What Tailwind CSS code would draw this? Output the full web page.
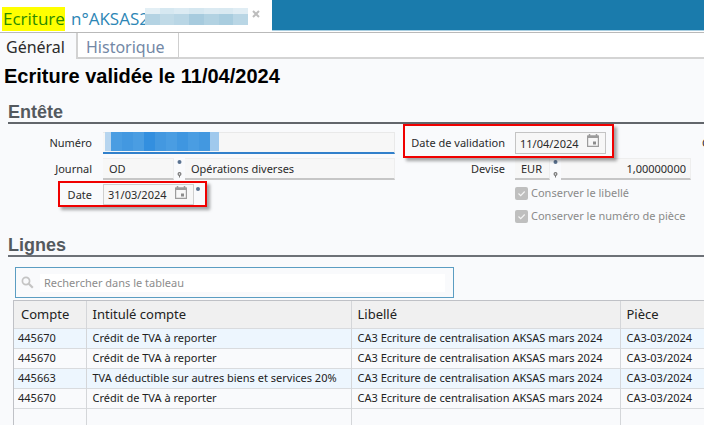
<!DOCTYPE html>
<html lang="fr">
<head>
<meta charset="utf-8">
<meta name="viewport" content="width=device-width, initial-scale=1">
<title>Ecriture</title>
<script src="https://cdn.jsdelivr.net/npm/@tailwindcss/browser@4"></script>
</head>
<body class="flex min-h-screen flex-col overflow-hidden bg-[#f9fafc] font-['Noto_Sans','Open_Sans',sans-serif] text-[11px] text-[#2b2b2b]">

<svg class="hidden" aria-hidden="true">
  <symbol id="calendar" viewBox="0 0 12 14">
    <path d="M2.500 0v3M9.500 0v3" stroke="#9c9c9c" stroke-width="1.500"/>
    <path d="M.6 2h10.800v10.400H.6z" fill="#f7f7f7" stroke="#9c9c9c" stroke-width="1.200"/>
    <path d="M.5 1.500h11v2.500H.5z" fill="#9c9c9c"/>
    <path d="M6 7.500h3v3H6z" fill="#8c8c8c"/>
  </symbol>
  <symbol id="marks" viewBox="0 0 5 20">
    <circle cx="2.500" cy="3" r="2" fill="#5a7291"/>
    <circle cx="2.500" cy="15" r="1.400" fill="none" stroke="#777" stroke-width="1.200"/>
    <path d="M2.500 16.500v2" stroke="#777"/>
  </symbol>
</svg>

<header class="flex h-[33px] border-b border-[#b9b9b9] bg-white">
  <div class="flex w-[272px] shrink-0 items-start pl-0.5">
    <h2 class="mt-[7px] flex font-['Open_Sans','Noto_Sans',sans-serif] text-[17px] leading-6 whitespace-nowrap text-[#2d86b5]">
      <span class="w-[63px] bg-[#ffff00] pl-px text-[#2c8a00]">Ecriture</span><span class="w-20 pl-1.5">n°AKSAS2</span>
    </h2>
    <div class="relative mt-2 grid w-[103px] grid-cols-7 grid-rows-[6px_11px]" aria-hidden="true">
      <i class="bg-[#e3eff5]"></i><i class="bg-[#d6e8f1]"></i><i class="bg-[#dcebf3]"></i><i class="bg-[#d5e7f0]"></i><i class="bg-[#dbeaf2]"></i><i class="bg-[#d9e9f1]"></i><i class="bg-[#e0edf4]"></i>
      <i class="bg-[#b4d3e3]"></i><i class="bg-[#c0dae7]"></i><i class="bg-[#b9d6e5]"></i><i class="bg-[#a7cbde]"></i><i class="bg-[#b2d2e2]"></i><i class="bg-[#a9cddf]"></i><i class="bg-[#b9d6e5]"></i>
    </div>
    <button type="button" aria-label="Fermer" class="mt-2.5 ml-1 size-2">
      <svg viewBox="0 0 8 8" class="size-2"><path d="M1 1l6 6M7 1L1 7" stroke="#bdbdbd" stroke-width="2"/></svg>
    </button>
  </div>
  <div class="h-[31px] grow border-b border-[#a9cfe2] bg-[#1a7bac]"></div>
</header>

<nav class="flex h-[26px] bg-white text-base leading-6">
  <a href="#general" class="w-[78px] border-r-2 border-[#d2d2d2] bg-[#f9fafc] pt-0.5 pl-1.5">Général</a>
  <a href="#historique" class="w-[101px] border-r border-b-2 border-[#cfcfcf] pt-0.5 pl-2 text-[#7388a6]">Historique</a>
  <div class="grow border-b-2 border-[#d4d4d4]"></div>
</nav>

<main class="flex grow flex-col font-normal">
  <h1 class="mt-[5px] pl-1 font-['Liberation_Sans',Arial,sans-serif] text-xl leading-6 font-bold text-black">Ecriture validée le 11/04/2024</h1>

  <section>
    <h2 class="mt-3.5 ml-2 border-b-2 border-[#62666b] font-['Liberation_Sans',Arial,sans-serif] text-lg leading-5 font-bold text-[#54595e]">Entête</h2>
    <form class="flex pt-2 whitespace-nowrap">
      <div class="flex w-[395px] shrink-0 flex-col gap-1 pl-9">
        <div class="flex h-[22px] items-center">
          <label for="numero" class="w-14 shrink-0 text-right">Numéro</label>
          <div class="relative ml-[11px] h-[22px] grow">
            <input id="numero" class="h-[22px] w-full border-t border-r border-b-2 border-[#e9e9e9] border-b-[#3180cb] bg-[#f7f7f7] px-1.5">
            <div class="absolute top-0 left-0.5 grid h-[19px] w-[114px] grid-cols-[6px_11px_11px_11px_11px_11px_11px_11px_11px_11px_9px]" aria-hidden="true">
              <i class="bg-[#b7d5ef]"></i><i class="bg-[#4a9de2]"></i><i class="bg-[#4398e0]"></i><i class="bg-[#4a9de2]"></i><i class="bg-[#338fdf]"></i><i class="bg-[#4398e0]"></i><i class="bg-[#4a9de2]"></i><i class="bg-[#3f96e0]"></i><i class="bg-[#4a9de2]"></i><i class="bg-[#4398e0]"></i><i class="bg-[#a0c9ed]"></i>
            </div>
          </div>
        </div>
        <div class="flex h-[22px] items-center">
          <label for="journal" class="w-14 shrink-0 text-right">Journal</label>
          <input id="journal" value="OD" class="ml-[11px] h-[22px] w-[71px] shrink-0 border-t border-r border-b-2 border-[#eee] border-b-[#c6c6c6] bg-[#f7f7f7] px-1.5">
          <svg class="mx-[3px] h-5 w-[5px] shrink-0" aria-hidden="true"><use href="#marks"/></svg>
          <input aria-label="Libellé du journal" value="Opérations diverses" class="h-[22px] w-0 grow border-t border-r border-b-2 border-[#eee] border-b-[#c6c6c6] bg-[#f7f7f7] px-1.5">
        </div>
        <div class="relative flex h-[22px] items-center">
          <label for="date" class="w-14 shrink-0 text-right">Date</label>
          <div class="relative ml-[11px] w-[91px]">
            <input id="date" value="31/03/2024" class="h-[22px] w-full border border-b-2 border-[#cfcfcf] bg-[#f7f7f7] px-1">
            <svg class="absolute top-0.5 right-[7px] h-3.5 w-3" aria-hidden="true"><use href="#calendar"/></svg>
          </div>
          <i class="mb-3 ml-0.5 size-1 rounded-full bg-[#5a7291]"></i>
          <div class="pointer-events-none absolute -top-[3px] left-[22px] h-[26px] w-[149px] border-2 border-[#f00000] shadow-[3px_3px_3px_rgba(0,0,0,0.35)]"></div>
        </div>
      </div>

      <div class="flex w-[296px] shrink-0 flex-col gap-1 pl-3">
        <div class="relative flex h-[22px] items-center">
          <label for="validation" class="w-[98px] shrink-0 text-right">Date de validation</label>
          <div class="relative ml-2.5 w-[91px]">
            <input id="validation" value="11/04/2024" class="h-[22px] w-full border border-[#c4c4c4] bg-[#f7f7f7] px-1">
            <svg class="absolute top-0.5 right-[7px] h-3.5 w-3" aria-hidden="true"><use href="#calendar"/></svg>
          </div>
          <div class="pointer-events-none absolute -top-2 -left-1 h-[34px] w-[211px] border-2 border-[#f00000] shadow-[3px_3px_3px_rgba(0,0,0,0.35)]"></div>
        </div>
        <div class="flex h-[22px] items-center">
          <label for="devise" class="w-[98px] shrink-0 text-right">Devise</label>
          <input id="devise" value="EUR" class="ml-2.5 h-[22px] w-[35px] shrink-0 border-t border-r border-b-2 border-[#eee] border-b-[#c6c6c6] bg-[#f7f7f7] pl-1.5">
          <svg class="mx-[3px] h-5 w-[5px] shrink-0" aria-hidden="true"><use href="#marks"/></svg>
          <input aria-label="Taux" value="1,00000000" class="h-[22px] w-0 grow border-t border-r border-b-2 border-[#eee] border-b-[#c6c6c6] bg-[#f7f7f7] pr-1 text-right">
        </div>
        <div class="-mt-0.5 flex flex-col pl-[108px] text-[#8a8a8a]">
          <label class="flex h-[23px] items-center gap-[3px]">
            <span class="relative size-[13px]"><input type="checkbox" checked disabled class="block size-[13px] appearance-none rounded-xs bg-[#bfbfbf]"><svg viewBox="0 0 13 13" class="absolute inset-0"><path d="M3.500 6.500l2.200 2.200 4-4.200" fill="none" stroke="#f4f4f4" stroke-width="1.200"/></svg></span>
            Conserver le libellé
          </label>
          <label class="flex h-[23px] items-center gap-[3px]">
            <span class="relative size-[13px]"><input type="checkbox" checked disabled class="block size-[13px] appearance-none rounded-xs bg-[#bfbfbf]"><svg viewBox="0 0 13 13" class="absolute inset-0"><path d="M3.500 6.500l2.200 2.200 4-4.200" fill="none" stroke="#f4f4f4" stroke-width="1.200"/></svg></span>
            Conserver le numéro de pièce
          </label>
        </div>
      </div>
      <span class="ml-[11px] h-[22px] leading-[22px]">C</span>
    </form>
  </section>

  <section class="flex grow flex-col">
    <h2 class="mt-[7px] ml-2 border-b-2 border-[#6d7177] font-['Liberation_Sans',Arial,sans-serif] text-lg leading-5 font-bold text-[#54595e]">Lignes</h2>
    <label class="mt-2.5 ml-[15px] flex h-[31px] w-[439px] items-center border border-[#5b9dc2] pl-[5px]">
      <svg viewBox="0 0 13 13" class="size-[13px] shrink-0" aria-hidden="true"><circle cx="5" cy="5" r="3.600" fill="none" stroke="#c4c4c4" stroke-width="1.700"/><path d="M7.800 7.800l4 4" stroke="#c4c4c4" stroke-width="2.200"/></svg>
      <input type="search" aria-label="Rechercher" placeholder="Rechercher dans le tableau" class="mr-2 ml-1.5 h-[18px] grow bg-white pl-1 placeholder:text-[#8c8c8c]">
    </label>
    <div class="mt-0.5 ml-[13px] flex grow flex-col border-t border-l border-[#bfc1c6]">
      <table class="h-full w-full grow table-fixed border-collapse text-left whitespace-nowrap text-[#222]">
        <colgroup><col class="w-[72px]"><col class="w-[265px]"><col class="w-[269px]"><col></colgroup>
        <thead>
          <tr class="h-[27px] border-b border-[#d9dbde] bg-[#f0f0f0] text-[13px]">
            <th class="border-r border-[#d4d6d9] pl-[7px] font-normal">Compte</th>
            <th class="border-r border-[#d4d6d9] pl-1.5 font-normal">Intitulé compte</th>
            <th class="border-r border-[#d4d6d9] pl-1.5 font-normal">Libellé</th>
            <th class="pl-1.5 font-normal">Pièce</th>
          </tr>
        </thead>
        <tbody>
          <tr class="h-5 border-b border-[#d9dbde] bg-[#edf6fe]"><td class="border-r border-[#d4d6d9] pl-1">445670</td><td class="border-r border-[#d4d6d9] pl-1.5">Crédit de TVA à reporter</td><td class="border-r border-[#d4d6d9] pl-1.5">CA3 Ecriture de centralisation AKSAS mars 2024</td><td class="pl-1.5">CA3-03/2024</td></tr>
          <tr class="h-5 border-b border-[#d9dbde]"><td class="border-r border-[#d4d6d9] pl-1">445670</td><td class="border-r border-[#d4d6d9] pl-1.5">Crédit de TVA à reporter</td><td class="border-r border-[#d4d6d9] pl-1.5">CA3 Ecriture de centralisation AKSAS mars 2024</td><td class="pl-1.5">CA3-03/2024</td></tr>
          <tr class="h-5 border-b border-[#d9dbde] bg-[#edf6fe]"><td class="border-r border-[#d4d6d9] pl-1">445663</td><td class="border-r border-[#d4d6d9] pl-1.5">TVA déductible sur autres biens et services 20%</td><td class="border-r border-[#d4d6d9] pl-1.5">CA3 Ecriture de centralisation AKSAS mars 2024</td><td class="pl-1.5">CA3-03/2024</td></tr>
          <tr class="h-5 border-b border-[#d9dbde]"><td class="border-r border-[#d4d6d9] pl-1">445670</td><td class="border-r border-[#d4d6d9] pl-1.5">Crédit de TVA à reporter</td><td class="border-r border-[#d4d6d9] pl-1.5">CA3 Ecriture de centralisation AKSAS mars 2024</td><td class="pl-1.5">CA3-03/2024</td></tr>
          <tr><td class="border-r border-[#d4d6d9]"></td><td class="border-r border-[#d4d6d9]"></td><td class="border-r border-[#d4d6d9]"></td><td></td></tr>
        </tbody>
      </table>
    </div>
  </section>
</main>
</body>
</html>
